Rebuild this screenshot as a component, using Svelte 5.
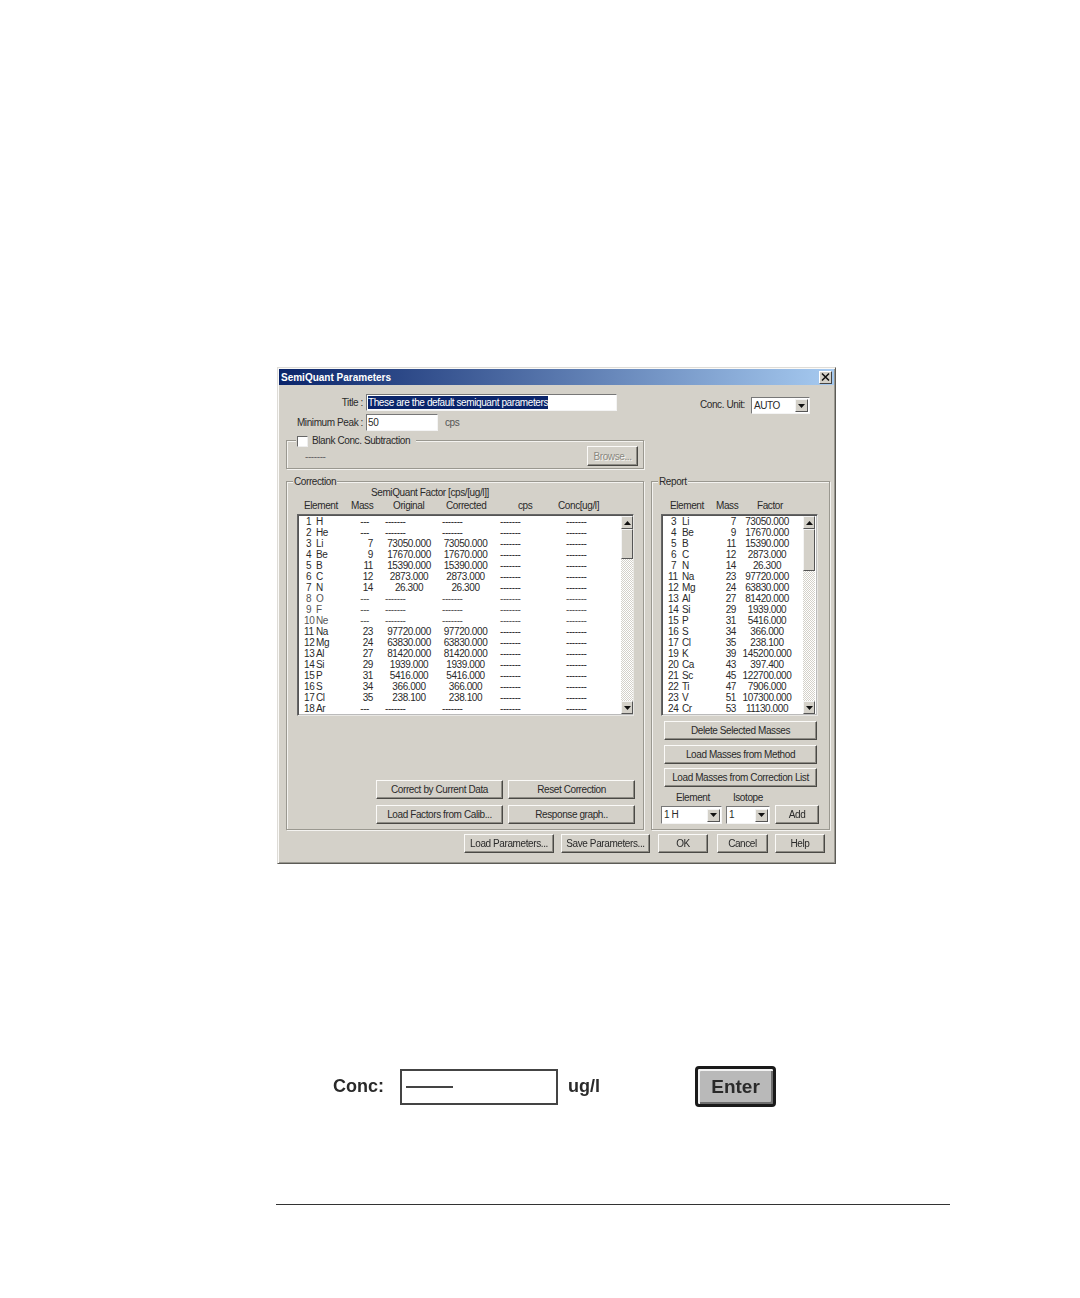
<script lang="ts">
  const dash = '-------';
  const correction = [
    ['1', 'H', '---', '', ''],
    ['2', 'He', '---', '', ''],
    ['3', 'Li', '7', '73050.000', '73050.000'],
    ['4', 'Be', '9', '17670.000', '17670.000'],
    ['5', 'B', '11', '15390.000', '15390.000'],
    ['6', 'C', '12', '2873.000', '2873.000'],
    ['7', 'N', '14', '26.300', '26.300'],
    ['8', 'O', '---', '', ''],
    ['9', 'F', '---', '', ''],
    ['10', 'Ne', '---', '', ''],
    ['11', 'Na', '23', '97720.000', '97720.000'],
    ['12', 'Mg', '24', '63830.000', '63830.000'],
    ['13', 'Al', '27', '81420.000', '81420.000'],
    ['14', 'Si', '29', '1939.000', '1939.000'],
    ['15', 'P', '31', '5416.000', '5416.000'],
    ['16', 'S', '34', '366.000', '366.000'],
    ['17', 'Cl', '35', '238.100', '238.100'],
    ['18', 'Ar', '---', '', '']
  ];
  const report = [
    ['3', 'Li', '7', '73050.000'],
    ['4', 'Be', '9', '17670.000'],
    ['5', 'B', '11', '15390.000'],
    ['6', 'C', '12', '2873.000'],
    ['7', 'N', '14', '26.300'],
    ['11', 'Na', '23', '97720.000'],
    ['12', 'Mg', '24', '63830.000'],
    ['13', 'Al', '27', '81420.000'],
    ['14', 'Si', '29', '1939.000'],
    ['15', 'P', '31', '5416.000'],
    ['16', 'S', '34', '366.000'],
    ['17', 'Cl', '35', '238.100'],
    ['19', 'K', '39', '145200.000'],
    ['20', 'Ca', '43', '397.400'],
    ['21', 'Sc', '45', '122700.000'],
    ['22', 'Ti', '47', '7906.000'],
    ['23', 'V', '51', '107300.000'],
    ['24', 'Cr', '53', '11130.000']
  ];
</script>

{#snippet arrow(up: boolean)}
  <svg width="7" height="4" viewBox="0 0 7 4">
    <path d={up ? 'M3.5 0 L7 4 L0 4 Z' : 'M0 0 L7 0 L3.5 4 Z'} fill="#111" />
  </svg>
{/snippet}

{#snippet combo(value: string, cls: string)}
  <div class="combo {cls}">
    <span class="combo-value">{value}</span>
    <span class="arrow-btn">{@render arrow(false)}</span>
  </div>
{/snippet}

{#snippet scrollbar(cls: string)}
  <div class="scrollbar {cls}">
    <span class="arrow-btn tall">{@render arrow(true)}</span>
    <span class="thumb"></span>
    <span class="track"></span>
    <span class="arrow-btn tall">{@render arrow(false)}</span>
  </div>
{/snippet}

<main class="page">
  <div class="dialog">
    <header class="titlebar">
      <span>SemiQuant Parameters</span>
      <span class="close">
        <svg width="9" height="8" viewBox="0 0 9 8">
          <path d="M1 0.5 L8 7.5 M8 0.5 L1 7.5" stroke="#111" stroke-width="1.5" />
        </svg>
      </span>
    </header>

    <div class="top">
      <div class="fields">
        <div class="field-row">
          <span class="field-label">Title :</span>
          <div class="input title-input"><span class="selected">These are the default semiquant parameters</span></div>
        </div>
        <div class="field-row second">
          <span class="field-label">Minimum Peak :</span>
          <div class="input peak-input">50</div>
          <span class="unit">cps</span>
        </div>
      </div>
      <div class="conc-unit">
        <span>Conc. Unit:</span>
        {@render combo('AUTO', 'combo-auto')}
      </div>
    </div>

    <section class="group blank">
      <div class="legend check-legend">
        <span class="checkbox"></span>
        <span>Blank Conc. Subtraction</span>
      </div>
      <div class="blank-body">
        <span class="blank-dash">{dash}</span>
        <button class="btn browse" disabled>Browse...</button>
      </div>
    </section>

    <div class="panels">
      <section class="group correction">
        <div class="legend">Correction</div>
        <div class="factor-title">SemiQuant Factor [cps/[ug/l]]</div>
        <div class="head correction-head">
          <span>Element</span><span>Mass</span><span>Original</span><span>Corrected</span><span>cps</span><span>Conc[ug/l]</span>
        </div>
        <div class="list correction-list">
          <div class="rows">
            {#each correction as [num, sym, mass, orig, corr]}
              <div class="row correction-row" class:faint={num === '8' || num === '9' || num === '10'}>
                <span class="num" class:one={num.length === 1}>{num}</span>
                <span class="sym">{sym}</span>
                <span class="mass" class:none={!orig}>{mass}</span>
                <span class="val" class:empty={!orig}>{orig || dash}</span>
                <span class="val second-val" class:empty={!corr}>{corr || dash}</span>
                <span class="dashes">{dash}</span>
                <span class="dashes">{dash}</span>
              </div>
            {/each}
          </div>
          {@render scrollbar('thumb-short')}
        </div>
        <div class="correction-actions">
          <button class="btn">Correct by Current Data</button>
          <button class="btn">Reset Correction</button>
          <button class="btn">Load Factors from Calib...</button>
          <button class="btn">Response graph..</button>
        </div>
      </section>

      <section class="group report">
        <div class="legend">Report</div>
        <div class="head report-head">
          <span>Element</span><span>Mass</span><span>Factor</span>
        </div>
        <div class="list report-list">
          <div class="rows">
            {#each report as [num, sym, mass, factor]}
              <div class="row report-row">
                <span class="num" class:one={num.length === 1}>{num}</span>
                <span class="sym">{sym}</span>
                <span class="mass">{mass}</span>
                <span class="val">{factor}</span>
              </div>
            {/each}
          </div>
          {@render scrollbar('thumb-long')}
        </div>
        <div class="report-actions">
          <button class="btn delete">Delete Selected Masses</button>
          <button class="btn">Load Masses from Method</button>
          <button class="btn">Load Masses from Correction List</button>
        </div>
        <div class="add-labels">
          <span>Element</span><span>Isotope</span>
        </div>
        <div class="add-row">
          {@render combo('1 H', 'combo-element')}
          {@render combo('1', 'combo-isotope')}
          <button class="btn add">Add</button>
        </div>
      </section>
    </div>

    <footer class="actions">
      <button class="btn load">Load Parameters...</button>
      <button class="btn save">Save Parameters...</button>
      <button class="btn ok">OK</button>
      <button class="btn cancel">Cancel</button>
      <button class="btn help">Help</button>
    </footer>
  </div>

  <div class="conc-row">
    <span class="conc-label">Conc:</span>
    <div class="conc-box"><span class="conc-line"></span></div>
    <span class="conc-unit-text">ug/l</span>
    <button class="enter">Enter</button>
  </div>

  <hr class="rule" />
</main>

<style>
  :global(body) {
    margin: 0;
    background: #fff;
  }

  .page {
    box-sizing: border-box;
    width: 1080px;
    height: 1298px;
    padding: 367px 0 0 277px;
    font-family: "Liberation Sans", Arial, sans-serif;
    overflow: hidden;
    filter: blur(0.3px);
  }

  .dialog {
    box-sizing: border-box;
    width: 559px;
    height: 497px;
    background: #d4d1c9;
    border: 1px solid;
    border-color: #dedcd7 #5c5b56 #5c5b56 #dedcd7;
    box-shadow: inset 1px 1px 0 #fbfaf8, inset -1px -1px 0 #9a9890;
    padding: 1px;
    font-size: 10px;
    letter-spacing: -0.4px;
    color: #2a2a2a;
    display: flex;
    flex-direction: column;
  }

  .titlebar {
    height: 16px;
    flex: none;
    display: flex;
    align-items: center;
    justify-content: space-between;
    padding: 0 2px;
    background: linear-gradient(90deg, #0a246a, #a6caf0);
    color: #fff;
    font-size: 10px;
    font-weight: bold;
    letter-spacing: 0;
  }

  .close {
    width: 13px;
    height: 13px;
    box-sizing: border-box;
    background: #d4d1c9;
    border: 1px solid;
    border-color: #fff #444 #444 #fff;
    display: flex;
    align-items: center;
    justify-content: center;
  }

  .top {
    display: flex;
    justify-content: space-between;
    margin-top: 9px;
    height: 37px;
    flex: none;
  }

  .field-row {
    display: flex;
    align-items: center;
    height: 17px;
  }

  .field-row.second {
    margin-top: 3px;
  }

  .field-label {
    width: 84px;
    text-align: right;
    margin-right: 3px;
    white-space: nowrap;
  }

  .input {
    box-sizing: border-box;
    height: 17px;
    background: #fff;
    border: 1px solid;
    border-color: #777 #f4f4f4 #f4f4f4 #777;
    line-height: 15px;
    padding-left: 1px;
    white-space: nowrap;
    overflow: hidden;
  }

  .title-input {
    width: 251px;
  }

  .selected {
    background: #0a246a;
    color: #fff;
    display: inline-block;
    line-height: 13px;
  }

  .peak-input {
    width: 72px;
  }

  .unit {
    margin-left: 7px;
    color: #555;
  }

  .conc-unit {
    display: flex;
    align-items: flex-start;
    margin: 3px 24px 0 0;
    gap: 6px;
    line-height: 15px;
  }

  .combo {
    box-sizing: border-box;
    height: 17px;
    background: #fff;
    border: 1px solid;
    border-color: #777 #f4f4f4 #f4f4f4 #777;
    display: flex;
    align-items: center;
    justify-content: space-between;
    padding: 0 1px 0 2px;
    line-height: 14px;
  }

  .combo-auto {
    width: 59px;
  }

  .combo-element {
    width: 61px;
    height: 18px;
    margin-top: 1px;
  }

  .combo-isotope {
    width: 44px;
    height: 18px;
    margin-top: 1px;
  }

  .arrow-btn {
    width: 13px;
    height: 13px;
    flex: none;
    box-sizing: border-box;
    background: #d4d1c9;
    border: 1px solid;
    border-color: #f4f4f4 #555 #555 #f4f4f4;
    display: flex;
    align-items: center;
    justify-content: center;
  }

  .group {
    box-sizing: border-box;
    border: 1px solid #9a9890;
    box-shadow: 1px 1px 0 #f4f3f0, inset 1px 1px 0 #f4f3f0;
  }

  .legend {
    width: fit-content;
    margin: -6px 0 0 6px;
    padding: 0 1px;
    height: 12px;
    line-height: 12px;
    background: #d4d1c9;
    white-space: nowrap;
  }

  .blank {
    flex: none;
    width: 358px;
    height: 29px;
    margin: 9px 0 0 7px;
  }

  .check-legend {
    display: flex;
    align-items: center;
    gap: 4px;
    margin: -6px 0 0 9px;
    padding-right: 6px;
  }

  .checkbox {
    box-sizing: border-box;
    width: 11px;
    height: 11px;
    background: #fff;
    border: 1px solid;
    border-color: #666 #eee #eee #666;
  }

  .blank-body {
    display: flex;
    justify-content: space-between;
    align-items: center;
    padding: 0 5px 0 18px;
    height: 20px;
    margin-top: -1px;
  }

  .blank-dash {
    color: #666;
  }

  .btn {
    box-sizing: border-box;
    height: 19px;
    padding: 0;
    background: #d4d1c9;
    border: 1px solid;
    border-color: #fbfaf8 #4a4945 #4a4945 #fbfaf8;
    box-shadow: inset -1px -1px 0 #8e8c85;
    font: inherit;
    letter-spacing: inherit;
    color: #2a2a2a;
    white-space: nowrap;
  }

  .browse {
    width: 51px;
    height: 20px;
    color: #8a8880;
    text-shadow: 1px 1px 0 #f7f6f3;
  }

  .panels {
    flex: none;
    display: flex;
    gap: 7px;
    height: 349px;
    margin: 12px 0 0 7px;
  }

  .correction {
    width: 358px;
    display: flex;
    flex-direction: column;
  }

  .report {
    width: 179px;
    display: flex;
    flex-direction: column;
  }

  .factor-title {
    height: 12px;
    line-height: 12px;
    margin: -1px 0 0 84px;
  }

  .head {
    display: grid;
    height: 12px;
    line-height: 12px;
    margin-top: 1px;
    white-space: nowrap;
  }

  .correction-head {
    grid-template-columns: 47px 42px 53px 72px 40px 1fr;
    padding-left: 17px;
  }

  .report-head {
    grid-template-columns: 46px 41px 1fr;
    padding-left: 18px;
    margin-top: 12px;
  }

  .list {
    box-sizing: border-box;
    height: 202px;
    flex: none;
    margin-top: 2px;
    display: flex;
    background: #fff;
    border: 1px solid;
    border-color: #666 #e8e7e3 #e8e7e3 #666;
    box-shadow: inset 1px 1px 0 #555, inset -1px -1px 0 #bbb;
    padding: 1px 0 1px 1px;
  }

  .correction-list {
    width: 337px;
    margin-left: 10px;
  }

  .report-list {
    width: 157px;
    margin-left: 9px;
    padding-right: 2px;
  }

  .rows {
    flex: 1;
    min-width: 0;
    overflow: hidden;
  }

  .row {
    display: grid;
    height: 11px;
    line-height: 11px;
    white-space: nowrap;
  }

  .correction-row {
    grid-template-columns: 17px 30px 27px 64px 57px 66px 1fr;
  }

  .report-row {
    grid-template-columns: 19px 28px 26px 58px;
  }

  .faint {
    color: #555;
  }

  .num {
    padding-left: 5px;
  }

  .num.one {
    padding-left: 7px;
  }

  .report-row .num.one {
    padding-left: 8px;
  }

  .mass {
    text-align: right;
  }

  .mass.none {
    padding-right: 4px;
  }

  .val {
    text-align: center;
    padding-left: 8px;
  }

  .second-val {
    padding-left: 0;
  }

  .report-row .val {
    padding-left: 4px;
  }

  .val.empty {
    text-align: left;
    padding-left: 12px;
  }

  .second-val.empty {
    padding-left: 5px;
  }

  .dashes {
    padding-left: 6px;
  }

  .scrollbar {
    flex: none;
    width: 12px;
    display: flex;
    flex-direction: column;
  }

  .scrollbar .arrow-btn {
    width: 12px;
  }

  .thumb {
    flex: none;
    box-sizing: border-box;
    background: #d4d1c9;
    border: 1px solid;
    border-color: #f4f4f4 #555 #555 #f4f4f4;
  }

  .thumb-short .thumb {
    height: 30px;
  }

  .thumb-long .thumb {
    height: 42px;
  }

  .track {
    flex: 1;
    background: repeating-conic-gradient(#fff 0 25%, #d4d1c9 0 50%) 0 0 / 2px 2px;
  }

  .tall {
    height: 13px;
  }

  .correction-actions {
    margin: auto 0 5px 89px;
    display: grid;
    grid-template-columns: 127px 127px;
    gap: 6px 5px;
  }

  .report-actions {
    margin: 5px 0 0 12px;
    width: 153px;
    display: flex;
    flex-direction: column;
    gap: 4px;
  }

  .delete {
    margin-bottom: 1px;
  }

  .add-labels {
    display: flex;
    margin: 5px 0 0 24px;
    height: 12px;
    line-height: 12px;
    gap: 23px;
  }

  .add-row {
    display: flex;
    align-items: flex-start;
    margin: 1px 0 0 9px;
  }

  .combo-isotope {
    margin-left: 4px;
  }

  .add {
    width: 44px;
    margin-left: 5px;
  }

  .actions {
    flex: none;
    display: flex;
    margin: 4px 0 0 185px;
    height: 19px;
  }

  .load {
    width: 90px;
  }

  .save {
    width: 89px;
    margin-left: 7px;
  }

  .ok {
    width: 50px;
    margin-left: 8px;
  }

  .cancel {
    width: 51px;
    margin-left: 9px;
  }

  .help {
    width: 50px;
    margin-left: 7px;
  }

  .conc-row {
    display: flex;
    align-items: center;
    height: 41px;
    margin: 202px 0 0 56px;
    font-size: 18px;
    font-weight: bold;
    color: #2a2a2a;
  }

  .conc-label {
    width: 67px;
  }

  .conc-box {
    box-sizing: border-box;
    width: 158px;
    height: 36px;
    border: 2px solid #444;
    display: flex;
    align-items: center;
    padding-left: 4px;
  }

  .conc-line {
    width: 47px;
    height: 2px;
    background: #444;
  }

  .conc-unit-text {
    width: 127px;
    margin-left: 10px;
  }

  .enter {
    box-sizing: border-box;
    width: 81px;
    height: 41px;
    padding: 0;
    background: #b9b9b9;
    border: 3px solid #1a1a1a;
    border-radius: 4px;
    box-shadow: inset 2px 2px 0 #f2f2f2, inset -2px -2px 0 #6e6e6e;
    font: inherit;
    font-size: 19px;
    color: #2a2a2a;
  }

  .rule {
    width: 674px;
    height: 1px;
    margin: 97px 0 0 -1px;
    border: 0;
    background: #333;
  }
</style>
